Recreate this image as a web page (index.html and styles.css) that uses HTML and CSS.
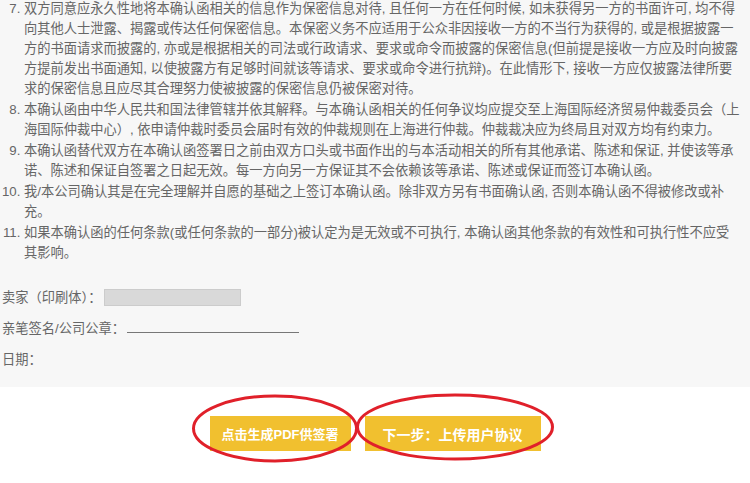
FILE: index.html
```html
<!DOCTYPE html>
<html lang="zh-CN">
<head>
    <meta charset="UTF-8">
    <title>确认函</title>
    <link rel="stylesheet" href="styles.css">
</head>
<body>
    <div class="letter">
        <ol class="terms" start="7">
            <li>双方同意应永久性地将本确认函相关的信息作为保密信息对待, 且任何一方在任何时候, 如未获得另一方的书面许可, 均不得<br>向其他人士泄露、揭露或传达任何保密信息。本保密义务不应适用于公众非因接收一方的不当行为获得的, 或是根据披露一<br>方的书面请求而披露的, 亦或是根据相关的司法或行政请求、要求或命令而披露的保密信息(但前提是接收一方应及时向披露<br>方提前发出书面通知, 以使披露方有足够时间就该等请求、要求或命令进行抗辩)。在此情形下, 接收一方应仅披露法律所要<br>求的保密信息且应尽其合理努力使被披露的保密信息仍被保密对待。</li>
            <li>本确认函由中华人民共和国法律管辖并依其解释。与本确认函相关的任何争议均应提交至上海国际经济贸易仲裁委员会（上<br>海国际仲裁中心）, 依申请仲裁时委员会届时有效的仲裁规则在上海进行仲裁。仲裁裁决应为终局且对双方均有约束力。</li>
            <li>本确认函替代双方在本确认函签署日之前由双方口头或书面作出的与本活动相关的所有其他承诺、陈述和保证, 并使该等承<br>诺、陈述和保证自签署之日起无效。每一方向另一方保证其不会依赖该等承诺、陈述或保证而签订本确认函。</li>
            <li>我/本公司确认其是在完全理解并自愿的基础之上签订本确认函。除非双方另有书面确认函, 否则本确认函不得被修改或补<br>充。</li>
            <li>如果本确认函的任何条款(或任何条款的一部分)被认定为是无效或不可执行, 本确认函其他条款的有效性和可执行性不应受<br>其影响。</li>
        </ol>

        <div class="sign">
            <div class="sign-row">卖家（印刷体）：<span class="name-box"></span></div>
            <div class="sign-row">亲笔签名/公司公章：<span class="sign-line"></span></div>
            <div class="sign-row">日期：</div>
        </div>
    </div>

    <div class="actions">
        <button class="btn btn-pdf">点击生成PDF供签署</button>
        <button class="btn btn-next">下一步：上传用户协议</button>
        <!-- 标注圈 -->
        <svg class="marks" width="750" height="96" viewBox="0 0 750 96">
            <ellipse cx="275" cy="41.5" rx="81.5" ry="32.5" fill="none" stroke="#e0202a" stroke-width="3"/>
            <ellipse cx="455" cy="40" rx="97.5" ry="32" fill="none" stroke="#e0202a" stroke-width="3"/>
        </svg>
    </div>
</body>
</html>
```

FILE: styles.css
```css
body {
    margin: 0;
    font-family: "Liberation Sans", "Noto Sans CJK SC", sans-serif;
    background-color: #ffffff;
    color: #666666;
}
.letter {
    background: #f7f7f7;
    padding: 0 0 12px 2px;
    font-size: 13.25px;
}
.terms {
    margin: -1px 0 0 0;
    padding: 0 3px 0 22px;
    line-height: 20px;
}
.terms li + li {
    margin-top: 1px;
}
.sign {
    margin-top: 20px;
}
.sign-row {
    height: 30px;
    line-height: 30px;
}
.sign-row + .sign-row {
    margin-top: 1px;
}
.name-box {
    display: inline-block;
    width: 135px;
    height: 15px;
    margin-left: 3px;
    background: #d9d9d9;
    border: 1px solid #cccccc;
    vertical-align: middle;
    margin-top: -2px;
}
.sign-line {
    display: inline-block;
    width: 172px;
    height: 12px;
    border-bottom: 1px solid #777777;
    margin-left: 2px;
}
.actions {
    position: relative;
    height: 96px;
    box-sizing: border-box;
    padding-top: 29px;
    display: flex;
    justify-content: center;
    align-items: flex-start;
    gap: 14px;
}
.btn {
    height: 35px;
    border: none;
    border-radius: 0;
    background: #f1c02f;
    color: #ffffff;
    font-family: "Liberation Sans", "Noto Sans CJK SC", sans-serif;
    font-weight: bold;
    padding: 0;
    cursor: pointer;
}
.btn-pdf {
    width: 141px;
    font-size: 13px;
}
.btn-next {
    width: 176px;
    font-size: 14px;
}
.marks {
    position: absolute;
    left: 0;
    top: 0;
    pointer-events: none;
}
```
